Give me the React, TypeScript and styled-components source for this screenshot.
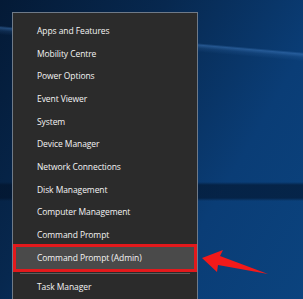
import React from "react";
import styled, { createGlobalStyle } from "styled-components";

const Global = createGlobalStyle`
  html, body { margin: 0; padding: 0; background: #0a2f5c; }
  body { width: 303px; height: 299px; overflow: hidden; }
`;

const Desktop = styled.div`
  position: relative;
  width: 303px;
  height: 299px;
  overflow: hidden;
  box-sizing: border-box;
  padding: 12px 0 0 12px;
  background:
    linear-gradient(185deg, transparent 0, transparent 52px, rgba(70, 130, 200, 0.45) 54px, rgba(70, 130, 200, 0.15) 57px, transparent 61px),
    linear-gradient(180deg, transparent 0, transparent 182px, rgba(2, 18, 40, 0.6) 185px, rgba(2, 18, 40, 0.6) 198px, transparent 201px),
    linear-gradient(120deg, #041a36 0%, #07284f 35%, #0a3d76 70%, #0b437e 100%);
`;

const Menu = styled.nav`
  width: 184px;
  height: 300px;
  box-sizing: content-box;
  background: #2b2b2b;
  border: 1px solid #6f7a88;
  border-bottom: none;
  padding-top: 6px;
  display: flex;
  flex-direction: column;
  font-family: "Open Sans", "Noto Sans", sans-serif;
  font-size: 8.5px;
  font-weight: 500;
  color: #f4f4f4;
`;

const Item = styled.div<{ $active?: boolean }>`
  position: relative;
  height: 22.7px;
  display: flex;
  align-items: center;
  padding-left: 24px;
  letter-spacing: -0.08px;
  background: ${(p) => (p.$active ? "#4a4a4a" : "transparent")};
  ${(p) =>
    p.$active &&
    `
    &::after {
      content: "";
      position: absolute;
      left: 0;
      right: 0;
      top: -2px;
      bottom: -3px;
      border: 3px solid #e3191c;
      pointer-events: none;
    }
  `}
`;

const Separator = styled.div`
  height: 1px;
  margin: 4px 7px 2px 7px;
  background: #5c5c5c;
`;

const Arrow = styled.svg`
  position: absolute;
  left: 0;
  top: 0;
  width: 303px;
  height: 299px;
  pointer-events: none;
`;

const items = [
  "Apps and Features",
  "Mobility Centre",
  "Power Options",
  "Event Viewer",
  "System",
  "Device Manager",
  "Network Connections",
  "Disk Management",
  "Computer Management",
  "Command Prompt",
];

export default function App() {
  return (
    <>
      <Global />
      <Desktop>
        <Menu>
          {items.map((t) => (
            <Item key={t}>{t}</Item>
          ))}
          <Item $active>Command Prompt (Admin)</Item>
          <Separator />
          <Item>Task Manager</Item>
        </Menu>
        <Arrow viewBox="0 0 303 299">
          <polygon
            points="202,258 223,250 220,256 268,274 218,265 217,272"
            fill="#f21a1a"
          />
        </Arrow>
      </Desktop>
    </>
  );
}
